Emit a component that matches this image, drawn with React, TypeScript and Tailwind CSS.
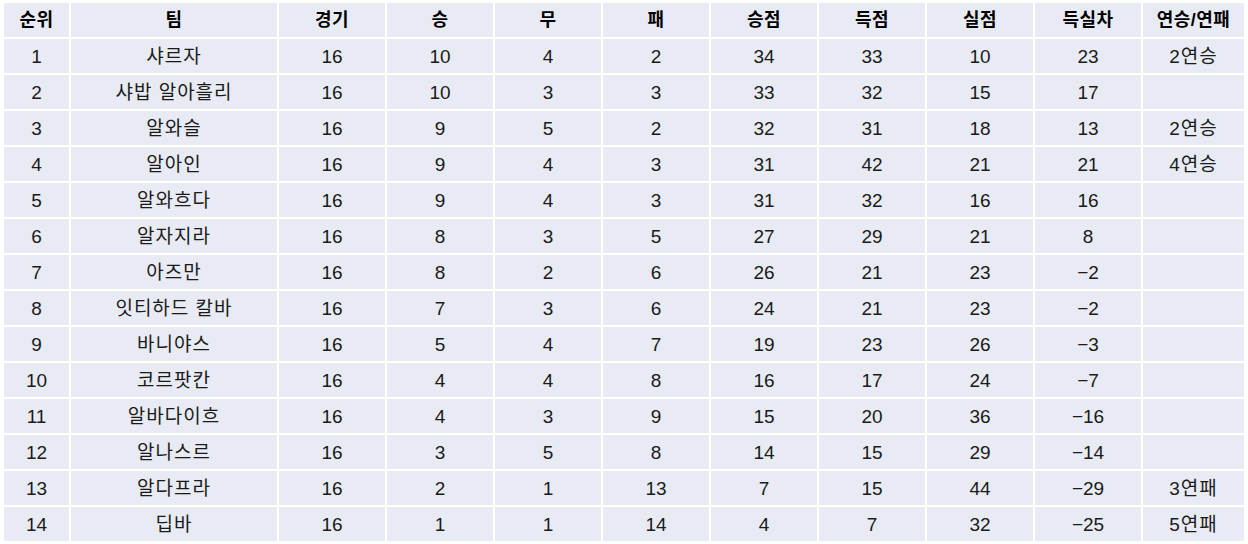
const headers = ["순위", "팀", "경기", "승", "무", "패", "승점", "득점", "실점", "득실차", "연승/연패"];

const rows: (string | number)[][] = [
  [1, "샤르자", 16, 10, 4, 2, 34, 33, 10, "23", "2연승"],
  [2, "샤밥 알아흘리", 16, 10, 3, 3, 33, 32, 15, "17", ""],
  [3, "알와슬", 16, 9, 5, 2, 32, 31, 18, "13", "2연승"],
  [4, "알아인", 16, 9, 4, 3, 31, 42, 21, "21", "4연승"],
  [5, "알와흐다", 16, 9, 4, 3, 31, 32, 16, "16", ""],
  [6, "알자지라", 16, 8, 3, 5, 27, 29, 21, "8", ""],
  [7, "아즈만", 16, 8, 2, 6, 26, 21, 23, "−2", ""],
  [8, "잇티하드 칼바", 16, 7, 3, 6, 24, 21, 23, "−2", ""],
  [9, "바니야스", 16, 5, 4, 7, 19, 23, 26, "−3", ""],
  [10, "코르팟칸", 16, 4, 4, 8, 16, 17, 24, "−7", ""],
  [11, "알바다이흐", 16, 4, 3, 9, 15, 20, 36, "−16", ""],
  [12, "알나스르", 16, 3, 5, 8, 14, 15, 29, "−14", ""],
  [13, "알다프라", 16, 2, 1, 13, 7, 15, 44, "−29", "3연패"],
  [14, "딥바", 16, 1, 1, 14, 4, 7, 32, "−25", "5연패"],
];

export default function App() {
  return (
    <div className="min-h-screen bg-white pt-[3px] pl-[4px] pr-[4px]" style={{ fontFamily: '"Liberation Sans", "Noto Sans CJK KR", sans-serif' }}>
      <div className="grid grid-cols-[65px_206px_repeat(8,106px)_1fr] gap-[2px] auto-rows-[34px]">
        {headers.map((h) => (
          <div key={h} className="bg-[#e8ebf4] flex items-center justify-center text-[18px] font-bold text-black tracking-[0.5px]">
            {h}
          </div>
        ))}
        {rows.map((r) =>
          r.map((c, i) => (
            <div
              key={`${r[0]}-${i}`}
              className={`bg-[#e8ebf4] flex items-center justify-center pt-[2px] text-[19px] text-[#1a1a1a] ${i === 1 || i === 10 ? "tracking-[1px]" : ""}`}
            >
              {c}
            </div>
          ))
        )}
      </div>
    </div>
  );
}
